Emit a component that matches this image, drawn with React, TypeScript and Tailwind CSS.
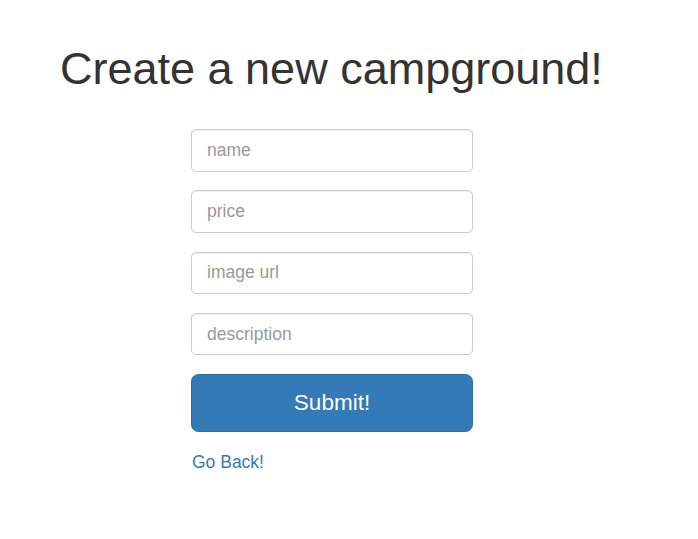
import React from "react";

export default function App() {
  const font = { fontFamily: '"Liberation Sans", Arial, Helvetica, sans-serif' };
  const inputCls =
    "block w-full h-[42.5px] px-[15px] text-[17.5px] text-[#555] bg-white border border-[#ccc] rounded-[5px] shadow-[inset_0_1px_1px_rgba(0,0,0,0.075)] placeholder:text-[#999] outline-none";
  return (
    <div className="min-h-[539px] w-[698px] bg-white text-[#333]" style={font}>
      <h1 className="pt-[44px] pl-[60px] text-[45px] leading-[49.5px] font-normal text-[#333]">
        Create a new campground!
      </h1>
      <form className="ml-[191px] w-[282px] mt-[35.5px]" onSubmit={(e) => e.preventDefault()}>
        <div className="mb-[18.75px]">
          <input className={inputCls} type="text" placeholder="name" />
        </div>
        <div className="mb-[18.75px]">
          <input className={inputCls} type="text" placeholder="price" />
        </div>
        <div className="mb-[18.75px]">
          <input className={inputCls} type="text" placeholder="image url" />
        </div>
        <div className="mb-[18.75px]">
          <input className={inputCls} type="text" placeholder="description" />
        </div>
        <div className="mb-[18.75px]">
          <button
            type="submit"
            className="block w-full h-[57.5px] text-[22.5px] text-white bg-[#337ab7] border border-[#2e6da4] rounded-[7.5px]"
          >
            Submit!
          </button>
        </div>
        <a href="#" className="block text-[17.5px] leading-[25px] text-[#337ab7] pl-[1px]">
          Go Back!
        </a>
      </form>
    </div>
  );
}
